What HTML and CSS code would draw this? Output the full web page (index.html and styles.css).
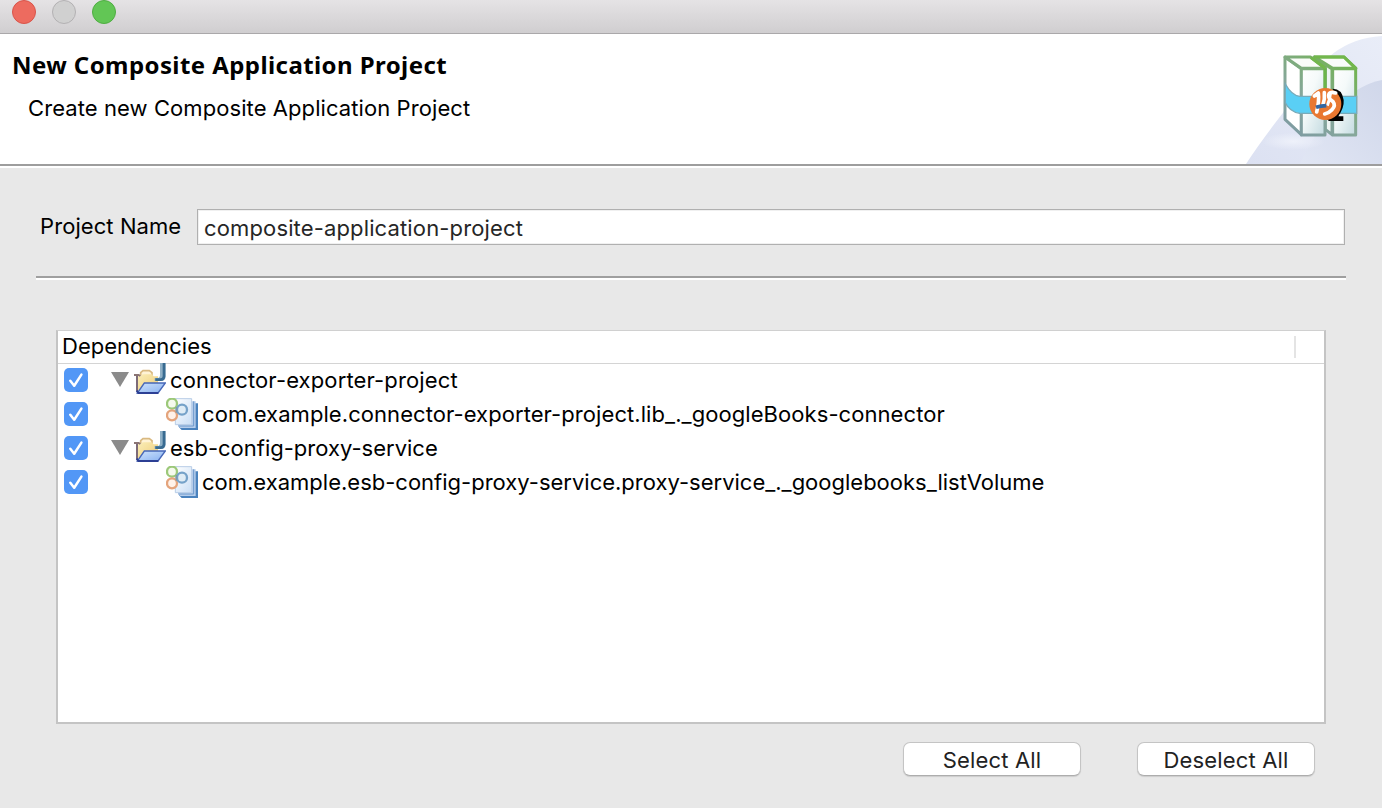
FILE: index.html
```html
<!DOCTYPE html>
<html lang="en">
<head>
<meta charset="utf-8">
<title>New Composite Application Project</title>
<link rel="stylesheet" href="styles.css">
</head>
<body>
<svg class="defs" aria-hidden="true">
  <defs>
    <linearGradient id="folderGold" x1="0" y1="0" x2="1" y2="1"><stop offset="0" stop-color="#fbeeb8"/><stop offset="1" stop-color="#edcb78"/></linearGradient>
    <linearGradient id="folderBlue" x1="0" y1="0" x2="1" y2="1"><stop offset="0" stop-color="#cfe4fc"/><stop offset="1" stop-color="#86aff0"/></linearGradient>
    <linearGradient id="page" x1="0" y1="0" x2="1" y2="1"><stop offset="0" stop-color="#ffffff"/><stop offset="1" stop-color="#c9def5"/></linearGradient>
    <symbol id="check" viewBox="0 0 24 24"><path d="M6.3 12.8 10.2 17.7 17.4 6.6" fill="none" stroke="#fff" stroke-width="2.5" stroke-linecap="round" stroke-linejoin="round"/></symbol>
    <symbol id="folder" viewBox="252 108 96 96">
      <path d="M272 146v-9l7-6h19l8 6v9" fill="#fff3d6" stroke="#d9b981" stroke-width="5"/>
      <path d="M262 146h12l4-4h28l5 6h13v36l-51 10-11-6z" fill="url(#folderGold)"/>
      <path d="M252 144h14l5 3" fill="none" stroke="#8b7473" stroke-width="6"/>
      <path d="M261 146v47" stroke="#7d6b78" stroke-width="6"/>
      <path d="M330 108h17v42q-2 12-15 12h-18v-9h11q5-1 5-8z" fill="#8fb0c6"/>
      <path d="M342 108v40q-1 10-10 10h-16" fill="none" stroke="#386b91" stroke-width="8"/>
      <path d="M283 168h63l-22 30h-62z" fill="url(#folderBlue)" stroke="#4667b8" stroke-width="4"/>
      <path d="M260 191l5 7h60" fill="none" stroke="#2c3f94" stroke-width="6"/>
    </symbol>
    <symbol id="artifact" viewBox="348 8 96 96">
      <path d="M390 24h54v80h-49l-8-8z" fill="#4a82bd"/>
      <path d="M384 18h53v80h-46l-7-6z" fill="#b5cdeb"/>
      <path d="M431 18v74h-46" fill="none" stroke="#6d98cb" stroke-width="3"/>
      <path d="M376 10h49v78h-49z" fill="url(#page)" stroke="#b8cde6" stroke-width="3"/>
      <circle cx="366" cy="25" r="15" fill="#f5faed" stroke="#9cc879" stroke-width="7"/>
      <circle cx="366" cy="60" r="15" fill="#fff2e9" stroke="#e4a47c" stroke-width="7"/>
      <circle cx="396" cy="43" r="15" fill="#dfecf5" stroke="#75a2c9" stroke-width="7"/>
      <path d="M379 52v-17" stroke="#8198a6" stroke-width="5"/>
    </symbol>
  </defs>
</svg>
<div class="window">
  <div class="titlebar">
    <span class="light light-close"></span><span class="light light-min"></span><span class="light light-zoom"></span>
  </div>
  <header class="banner">
    <div class="banner-text">
      <h1 class="title">New Composite Application Project</h1>
      <p class="subtitle">Create new Composite Application Project</p>
    </div>
    <svg class="banner-art" viewBox="48 30 408 390" aria-hidden="true">
      <defs>
        <linearGradient id="sweep" x1="0" y1="1" x2="1" y2="0"><stop offset="0" stop-color="#dce1f2"/><stop offset="1" stop-color="#e9edf8"/></linearGradient>
        <linearGradient id="sweep2" x1="1" y1="0" x2="0" y2="1"><stop offset="0" stop-color="#d0d7ea"/><stop offset="1" stop-color="#e1e6f4"/></linearGradient>
        <linearGradient id="face" x1="0" y1="0" x2="1" y2="1"><stop offset="0" stop-color="#fff"/><stop offset=".4" stop-color="#f5fafa"/><stop offset="1" stop-color="#c3dae0"/></linearGradient>
        <linearGradient id="edge" gradientUnits="userSpaceOnUse" x1="170" y1="330" x2="340" y2="110"><stop offset="0" stop-color="#7d9aa3"/><stop offset=".45" stop-color="#86a79a"/><stop offset="1" stop-color="#72b352"/></linearGradient>
        <radialGradient id="glow"><stop offset="0" stop-color="#eef1fa"/><stop offset="1" stop-color="#eef1fa" stop-opacity="0"/></radialGradient>
      </defs>
      <path d="M48 420Q90 355 158 268Q210 170 310 88Q370 42 456 36V420z" fill="url(#sweep)"/>
      <path d="M210 420Q260 310 330 240Q390 180 456 168V420z" fill="url(#sweep2)"/>
      <ellipse cx="190" cy="352" rx="95" ry="26" fill="url(#glow)"/>
      <g stroke="url(#edge)" stroke-width="9" stroke-linejoin="round">
        <path d="M252 99l54 36v197l-20-16V130z" fill="#edf4f3"/>
        <path d="M254 99h88l36 34h-70z" fill="#fafcf9"/>
        <path d="M308 134h69v199h-69z" fill="url(#face)"/>
        <path d="M165 99l49 35v198l-49-46z" fill="#fff"/>
        <path d="M165 99h76l44 34h-71z" fill="#fafcf9"/>
        <path d="M214 134h71v199h-71z" fill="url(#face)"/>
      </g>
      <path d="M285 133v70" stroke="#6bb549" stroke-width="9"/>
      <path d="M243 101l42 31M252 99h90l35 34" fill="none" stroke="#72b74c" stroke-width="9"/>
      <path d="M166 180q19 34 43 37h76v51h-76q-30-5-43-32z" fill="#5acff5" stroke="#78aab9" stroke-width="4"/>
      <path d="M286 217h94v51h-94z" fill="#5acff5" stroke="#78aab9" stroke-width="4"/>
      <path d="M308 194q28 0 33 34 2 22-16 49h15v14h-43l-12-9q30-18 30-43z" fill="#000"/>
      <circle cx="286" cy="240" r="48" fill="#e97831"/>
      <path d="M265 208q3 25-5 56M253 216l12-9M283 206q2 20-4 36M317 207q-21-6-21 9 0 9 13 17 9 12-3 24-8 9-22 13" fill="none" stroke="#fff" stroke-width="11" stroke-linecap="round"/>
      <path d="M302 205q-3 24-10 40" fill="none" stroke="#fff" stroke-width="9"/>
      <path d="M258 250q15-5 31-5" stroke="#3267a3" stroke-width="11" fill="none"/>
    </svg>
  </header>
  <main class="content">
    <div class="field"><label class="label" for="name">Project Name</label><input class="input" id="name" type="text" value="composite-application-project"></div>
    <div class="divider"></div>
    <section class="tree">
      <div class="tree-head"><span class="head-text">Dependencies</span><span class="col-sep"></span></div>
      <div class="row"><span class="box"><svg><use href="#check"/></svg></span><span class="arrow"></span><svg class="icon folder"><use href="#folder"/></svg><span class="name project">connector-exporter-project</span></div>
      <div class="row child"><span class="box"><svg><use href="#check"/></svg></span><svg class="icon"><use href="#artifact"/></svg><span class="name library">com.example.connector-exporter-project.lib_._googleBooks-connector</span></div>
      <div class="row"><span class="box"><svg><use href="#check"/></svg></span><span class="arrow"></span><svg class="icon folder"><use href="#folder"/></svg><span class="name">esb-config-proxy-service</span></div>
      <div class="row child"><span class="box"><svg><use href="#check"/></svg></span><svg class="icon"><use href="#artifact"/></svg><span class="name">com.example.esb-config-proxy-service.proxy-service_._googlebooks_listVolume</span></div>
    </section>
    <div class="actions"><button class="button">Select All</button><button class="button">Deselect All</button></div>
  </main>
</div>
</body>
</html>
```
FILE: styles.css
```css
* { box-sizing: border-box; }
body { margin: 0; font: 22px/34px Inter, Roboto, sans-serif; color: #000; overflow: hidden; }
.defs { display: block; width: 0; height: 0; }
.window { width: 1382px; height: 808px; background: #e8e8e8; display: flex; flex-direction: column; }
.titlebar { height: 34px; flex: none; display: flex; gap: 16px; padding-left: 12px; background: linear-gradient(#e5e3e5, #d0ced0); border-bottom: 1px solid #aaa8aa; }
.light { width: 24px; height: 24px; border-radius: 50%; border: 1px solid; }
.light-close { background: #ed6b5f; border-color: #d9544a; }
.light-min { background: #d0d0d0; border-color: #b3b1b3; }
.light-zoom { background: #62c655; border-color: #4fad42; }
.banner { height: 134px; flex: none; display: flex; justify-content: space-between; background: #fff; border-bottom: 2px solid #fff; box-shadow: inset 0 -2px #9d9d9d; }
.banner-art { width: 136px; height: 130px; display: block; }
.title { margin: 14px 0 0 12px; font: bold 24px/34px "Noto Sans", "Open Sans", sans-serif; letter-spacing: .42px; white-space: nowrap; }
.subtitle { margin: 9px 0 0 28px; letter-spacing: .08px; white-space: nowrap; }
.content { display: flex; flex-direction: column; }
.field { display: flex; margin: 41px 37px 0 40px; height: 36px; }
.label { width: 157px; letter-spacing: .08px; white-space: nowrap; }
.input { flex: 1; min-width: 0; height: 36px; border: 1px solid #b0b0b0; box-shadow: inset 0 0 0 1px #f0f0f0; border-radius: 0; padding: 1px 6px 0; font: inherit; letter-spacing: .14px; color: #262626; background: #fff; outline: none; }
.divider { height: 4px; margin: 31px 36px 0; background: #fff; border-top: 2px solid #9f9f9f; }
.tree { margin: 50px 56px 0; height: 394px; background: #fff; border: 2px solid #c4c4c4; border-top: 1px solid #d0d0d0; }
.tree-head { height: 33px; border-bottom: 1px solid #d4d4d4; display: flex; justify-content: space-between; padding: 0 28px 0 4px; line-height: 30px; }
.col-sep { width: 2px; height: 22px; margin-top: 5px; background: #e4e4e4; }
.row { height: 34px; display: flex; align-items: flex-start; padding-left: 6px; white-space: nowrap; line-height: 33px; }
.box { width: 24px; height: 24px; margin-top: 4px; border-radius: 5px; background: #5297f6; flex: none; }
.box svg { display: block; width: 24px; height: 24px; }
.arrow { width: 18px; height: 15px; margin: 8px 5px 0 23px; background: #8b8b8b; clip-path: polygon(0 0, 100% 0, 50% 100%); flex: none; }
.icon { width: 32px; height: 32px; flex: none; }
.folder { margin-top: -1px; }
.child .icon { margin: 0 0 0 78px; }
.name { margin-left: 4px; }
.project { letter-spacing: .13px; }
.library { letter-spacing: .07px; }
.actions { display: flex; justify-content: flex-end; gap: 56px; padding: 18px 67px 0 0; }
.button { width: 178px; height: 34px; border: 1px solid #c4c4c4; border-bottom-color: #adadad; border-radius: 7px; background: #fff; font: inherit; letter-spacing: .15px; color: #222; padding: 0; line-height: 34px; box-shadow: 0 1px 1px rgba(0,0,0,.12); }
```
